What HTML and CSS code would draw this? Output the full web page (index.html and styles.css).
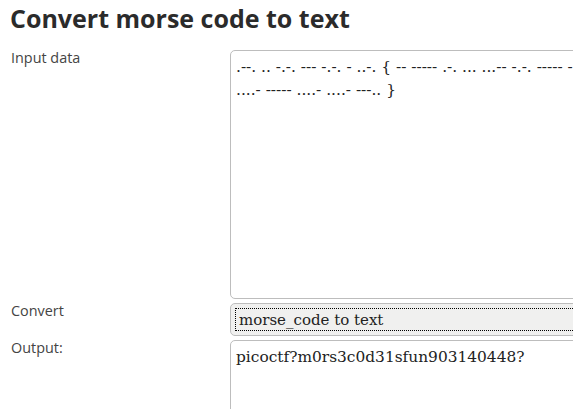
FILE: index.html
```html
<!DOCTYPE html>
<html lang="en">
<head>
<meta charset="utf-8">
<title>Convert morse code to text</title>
<link rel="stylesheet" href="styles.css">
</head>
<body>
<h1 class="title">Convert morse code to text</h1>
<form class="form">
  <div class="row">
    <label class="label" for="input">Input data</label>
    <textarea id="input" class="field area area-input">.--. .. -.-. --- -.-. - ..-. { -- ----- .-. ... ...-- -.-. ----- -.. ...-- .---- ... ..-. ..- -. ----. ----- ...-- .---- ....- ----- ....- ....- ---.. }</textarea>
  </div>
  <div class="row">
    <label class="label" for="convert">Convert</label>
    <select id="convert" class="field select">
      <option>morse_code to text</option>
    </select>
  </div>
  <div class="row">
    <label class="label" for="output">Output:</label>
    <textarea id="output" class="field area area-output">picoctf?m0rs3c0d31sfun903140448?</textarea>
  </div>
</form>
</body>
</html>
```
FILE: styles.css
```css
html, body {
  margin: 0;
  padding: 0;
  background: #ffffff;
  overflow: hidden;
}
body {
  padding: 0 0 0 10px;
  font-family: "Open Sans", "DejaVu Sans", sans-serif;
  color: #333333;
}
.title {
  margin: 2px 0 16px 0;
  font-size: 25px;
  font-weight: 700;
  color: #2b2b2b;
  line-height: 32px;
}
.form {
  display: flex;
  flex-direction: column;
  gap: 4px;
}
.row {
  display: flex;
  align-items: flex-start;
}
.label {
  width: 219px;
  flex: none;
  padding-left: 1px;
  font-size: 14.4px;
  line-height: 28px;
  margin-top: -6px;
  color: #444444;
}
.field {
  flex: none;
  box-sizing: border-box;
  width: 640px;
  border: 1px solid #bdbdbd;
  border-radius: 5px;
  background: #ffffff;
  font-family: "DejaVu Serif", serif;
  font-size: 15.4px;
  color: #222222;
  margin: 0;
}
.area {
  resize: none;
  padding: 5px 5px;
  line-height: 23px;
  overflow: hidden;
}
.area-input {
  height: 249px;
}
.area-output {
  height: 80px;
}
.select {
  appearance: none;
  -webkit-appearance: none;
  height: 33px;
  padding: 0 8px;
  background: #f0f0ef;
  outline: 1px dotted #000000;
  outline-offset: -6px;
  font-size: 15px;
}
```
